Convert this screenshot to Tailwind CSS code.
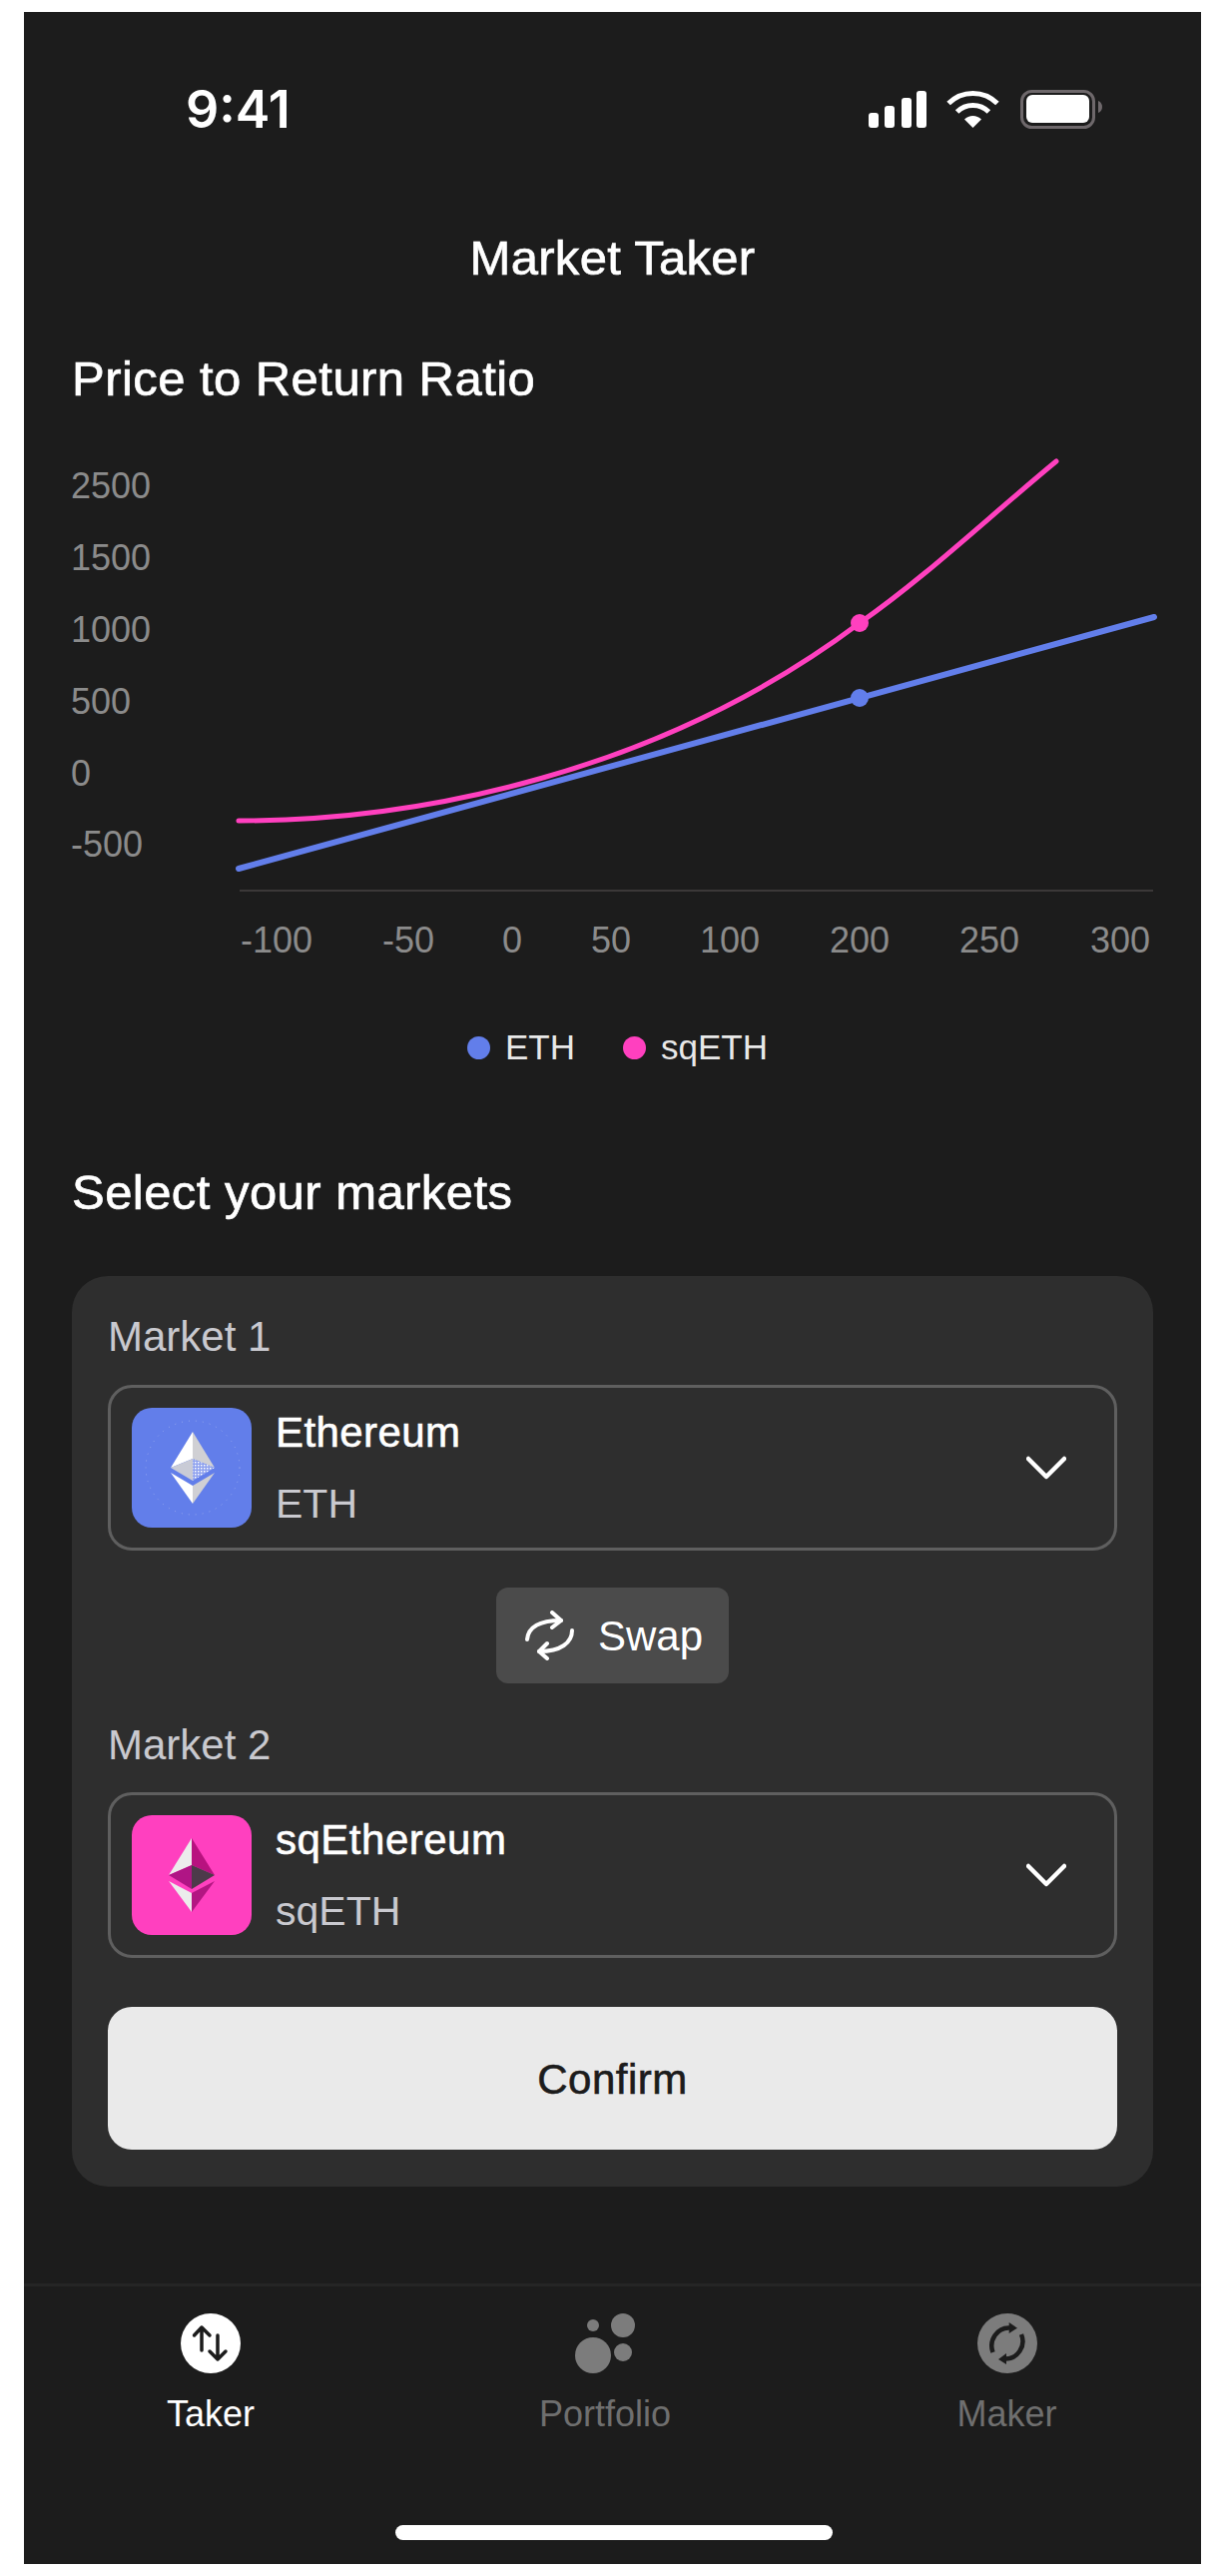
<!DOCTYPE html>
<html lang="en">
<head>
  <meta charset="UTF-8" />
  <title>Market Taker</title>
  <script src="https://cdn.jsdelivr.net/npm/@tailwindcss/browser@4"></script>
</head>
<body class="bg-white font-['Liberation_Sans',sans-serif]">
  <div class="ml-[24px] mt-[12px] flex h-[2556px] w-[1179px] flex-col bg-[#1c1c1c] text-white">

    <!-- Status bar -->
    <div class="flex h-[196px] shrink-0 items-center justify-between pl-[162px] pr-[98px]">
      <span class="font-['Inter',sans-serif] text-[52px] font-semibold leading-none">9:41</span>
      <svg width="236" height="42" viewBox="868 89 236 42" fill="none">
        <rect x="869" y="113" width="10" height="15" rx="3" fill="#fff" />
        <rect x="885" y="106" width="10" height="22" rx="3" fill="#fff" />
        <rect x="902" y="98" width="10" height="30" rx="3" fill="#fff" />
        <rect x="917" y="91" width="10" height="37" rx="3" fill="#fff" />
        <path d="M949.1 103.6A34.5 34.5 0 0 1 997.9 103.6" stroke="#fff" stroke-width="5" />
        <path d="M957.6 112.1A22.5 22.5 0 0 1 989.4 112.1" stroke="#fff" stroke-width="5" />
        <path d="M973.5 128L965 119.5A12 12 0 0 1 982 119.5Z" fill="#fff" />
        <rect x="1022.5" y="91.5" width="72" height="36" rx="10" stroke="#6e686b" stroke-width="3" />
        <rect x="1027" y="95" width="63" height="28" rx="6" fill="#fff" />
        <path d="M1099 101C1102 102 1103 105 1103 107S1102 112 1099 113Z" fill="#6e686b" />
      </svg>
    </div>

    <!-- Title -->
    <h1 class="flex h-[100px] shrink-0 items-center justify-center pt-[2px] text-[49px] font-normal tracking-[0.3px] [-webkit-text-stroke-width:0.7px]">Market Taker</h1>

    <h2 class="flex h-[142px] shrink-0 items-center pl-[48px] pt-[1px] text-[49px] font-normal tracking-[0.45px] [-webkit-text-stroke-width:0.7px]">Price to Return Ratio</h2>

    <!-- Chart -->
    <svg class="block h-[560px] w-[1179px] shrink-0" viewBox="24 450 1179 560" fill="none">
      <g fill="#8b8b8b" font-size="36" dominant-baseline="central">
        <text x="71" y="486">2500</text>
        <text x="71" y="558">1500</text>
        <text x="71" y="630">1000</text>
        <text x="71" y="702">500</text>
        <text x="71" y="774">0</text>
        <text x="71" y="845">-500</text>
      </g>
      <g fill="#8b8b8b" font-size="36" text-anchor="middle" dominant-baseline="central">
        <text x="277" y="941">-100</text>
        <text x="409" y="941">-50</text>
        <text x="513" y="941">0</text>
        <text x="612" y="941">50</text>
        <text x="731" y="941">100</text>
        <text x="861" y="941">200</text>
        <text x="991" y="941">250</text>
        <text x="1122" y="941">300</text>
      </g>
      <path d="M240 892H1155" stroke="#3b3838" stroke-width="2" />
      <path d="M239 870L1156 618" stroke="#627eea" stroke-width="6" stroke-linecap="round" />
      <circle cx="861" cy="699" r="9" fill="#627eea" />
      <path d="M239 822C420 822 661 774 861 624C927 578 990 518 1058 462" stroke="#ff40bf" stroke-width="5" stroke-linecap="round" />
      <circle cx="861" cy="624" r="9" fill="#ff40bf" />
    </svg>

    <!-- Legend -->
    <div class="flex h-[78px] shrink-0 items-center justify-center gap-[15px] pl-[10px] text-[35px] text-[#e8e8e8]">
      <span class="h-[23px] w-[23px] rounded-full bg-[#627eea]"></span>
      <span class="mr-[33px]">ETH</span>
      <span class="h-[23px] w-[23px] rounded-full bg-[#ff40bf]"></span>
      <span>sqETH</span>
    </div>

    <h2 class="mt-[66px] flex h-[80px] shrink-0 items-center pl-[48px] pt-[2px] text-[49px] font-normal tracking-[0.45px] [-webkit-text-stroke-width:0.7px]">Select your markets</h2>

    <!-- Market card -->
    <section class="mx-[48px] mt-[44px] flex h-[912px] shrink-0 flex-col rounded-[36px] bg-[#2e2e2e] px-[36px] pt-[36px]">
      <p class="flex h-[48px] shrink-0 items-center text-[42px] text-[#c9c9cf]">Market 1</p>

      <div class="mt-[25px] flex h-[166px] shrink-0 items-center rounded-[24px] border-[3px] border-[#5f5f5f] pl-[21px] pr-[48px]">
        <div class="h-[120px] w-[120px] shrink-0 overflow-hidden rounded-[20px] bg-[#627eea]">
          <svg width="120" height="120" viewBox="0 0 120 120">
            <defs>
              <pattern id="dots" width="3" height="3" patternUnits="userSpaceOnUse">
                <rect width="3" height="3" fill="#8ea1ee" />
                <rect width="1.5" height="1.5" fill="#fff" />
              </pattern>
            </defs>
            <circle cx="61" cy="60" r="47" fill="none" stroke="#c5cef5" stroke-opacity=".5" stroke-dasharray="1 6" />
            <path d="M61 24L39 60L61 51Z" fill="#fff" />
            <path d="M61 24L83 60L61 51Z" fill="#d0d0d4" />
            <path d="M39 60L61 51V73Z" fill="#c9cbd6" />
            <path d="M83 60L61 51V73Z" fill="url(#dots)" />
            <path d="M39 65L61 78V96Z" fill="#fff" />
            <path d="M83 65L61 78V96Z" fill="#d0d0d4" />
          </svg>
        </div>
        <div class="ml-[24px] flex flex-col gap-[27px]">
          <span class="text-[42px] leading-[44px] tracking-[0.4px] [-webkit-text-stroke-width:0.6px]">Ethereum</span>
          <span class="text-[41px] leading-[44px] text-[#c9c9cf]">ETH</span>
        </div>
        <svg class="ml-auto" width="40" height="24" viewBox="0 0 40 24" fill="none">
          <path d="M2 3L20 21L38 3" stroke="#fff" stroke-width="4.5" stroke-linecap="round" stroke-linejoin="round" />
        </svg>
      </div>

      <button class="mx-auto mt-[37px] flex h-[96px] w-[233px] shrink-0 items-center gap-[23px] rounded-[12px] bg-[#4b4b4b] pl-[29px] text-[42px]">
        <svg width="50" height="50" viewBox="0 0 50 50" fill="none" stroke="#fff" stroke-width="4" stroke-linecap="round" stroke-linejoin="round">
          <path d="M2 29C3 18 12 10 36 10" />
          <path d="M27 2L36 10L27 17" />
          <path d="M47 20C47 32 36 41 14 41" />
          <path d="M22 33L14 41L22 48" />
        </svg>
        <span>Swap</span>
      </button>

      <p class="mt-[37px] flex h-[48px] shrink-0 items-center text-[42px] text-[#c9c9cf]">Market 2</p>

      <div class="mt-[24px] flex h-[166px] shrink-0 items-center rounded-[24px] border-[3px] border-[#5f5f5f] pl-[21px] pr-[48px]">
        <div class="h-[120px] w-[120px] shrink-0 rounded-[20px] bg-[#ff40bf]">
          <svg width="120" height="120" viewBox="0 0 120 120">
            <path d="M60 23L37 60L60 50Z" fill="#ececec" />
            <path d="M60 23L83 60L60 50Z" fill="#b8127f" />
            <path d="M37 60L60 50V74Z" fill="#b01585" />
            <path d="M83 60L60 50V74Z" fill="#4d3a4a" />
            <path d="M37 66L60 78V97Z" fill="#ececec" />
            <path d="M83 66L60 78V97Z" fill="#b31682" />
          </svg>
        </div>
        <div class="ml-[24px] flex flex-col gap-[27px]">
          <span class="text-[42px] leading-[44px] tracking-[0.5px] [-webkit-text-stroke-width:0.6px]">sqEthereum</span>
          <span class="text-[41px] leading-[44px] text-[#c9c9cf]">sqETH</span>
        </div>
        <svg class="ml-auto" width="40" height="24" viewBox="0 0 40 24" fill="none">
          <path d="M2 3L20 21L38 3" stroke="#fff" stroke-width="4.5" stroke-linecap="round" stroke-linejoin="round" />
        </svg>
      </div>

      <button class="mt-[49px] h-[143px] shrink-0 rounded-[24px] bg-[#eaeaea] pt-[2px] text-[42px] tracking-[0.5px] text-[#1c1c1c] [-webkit-text-stroke-width:0.6px]">Confirm</button>
    </section>

    <!-- Tab bar -->
    <nav class="mt-auto grid h-[281px] shrink-0 grid-cols-[374px_416px_389px] border-t-[3px] border-[#252525] pt-[27px] text-[36px] text-[#6f6f6f]">
      <div class="flex flex-col items-center gap-[20px]">
        <svg width="60" height="60" viewBox="0 0 60 60" fill="none">
          <circle cx="30" cy="30" r="30" fill="#fff" />
          <path d="M21 37V14M13.5 22L21 14L29 22M37 22V46M29 38L37 46L45 38" stroke="#1c1c1c" stroke-width="3.5" stroke-linecap="round" stroke-linejoin="round" />
        </svg>
        <span class="leading-[42px] text-white">Taker</span>
      </div>
      <div class="flex flex-col items-center gap-[20px]">
        <svg width="60" height="60" viewBox="0 0 60 60" fill="#7c7c7c">
          <circle cx="18" cy="42" r="18" />
          <circle cx="18" cy="12" r="6" />
          <circle cx="48" cy="12" r="12" />
          <circle cx="48" cy="39" r="9" />
        </svg>
        <span class="leading-[42px]">Portfolio</span>
      </div>
      <div class="flex flex-col items-center gap-[20px]">
        <svg width="60" height="60" viewBox="0 0 60 60" fill="none">
          <circle cx="30" cy="30" r="30" fill="#7c7c7c" />
          <path d="M15.5 39C11 27 20 14 32 14.5M44 21C49 33 40 45.5 28 45.5" stroke="#1c1c1c" stroke-width="4.5" />
          <path d="M31.7 9L40 14.7L31.7 20ZM29 40L21 46L29 51Z" fill="#1c1c1c" />
        </svg>
        <span class="leading-[42px]">Maker</span>
      </div>
    </nav>
  </div>
  <div class="absolute left-[396px] top-[2529px] h-[15px] w-[438px] rounded-full bg-white"></div>
</body>
</html>
